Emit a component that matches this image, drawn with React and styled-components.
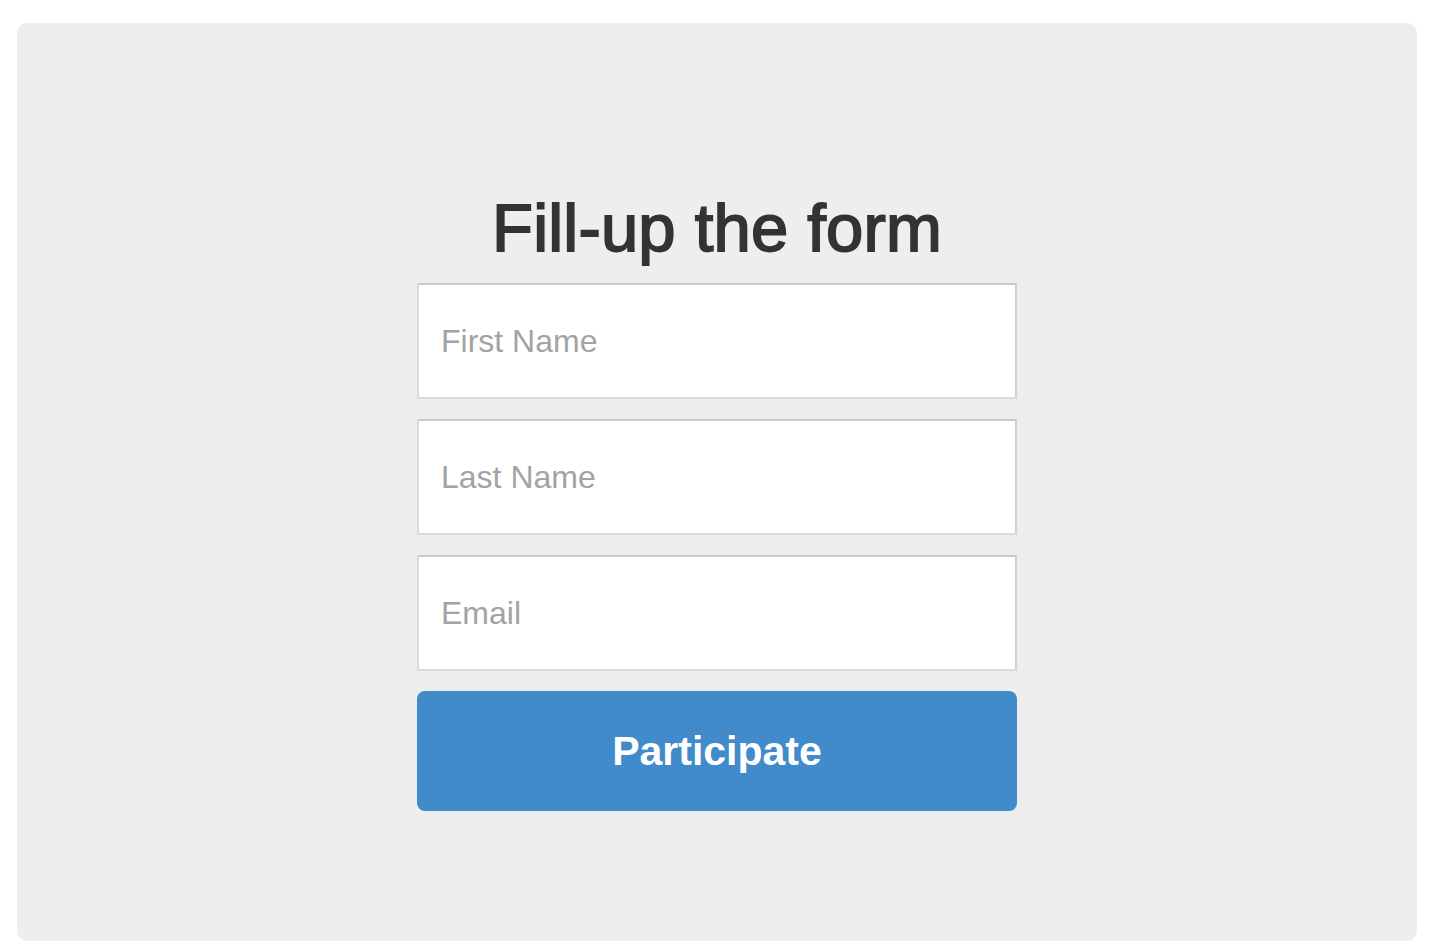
import styled, { createGlobalStyle } from "styled-components";

const GlobalStyle = createGlobalStyle`
  body {
    margin: 0;
    background: #fff;
    font-family: "Liberation Sans", Arial, sans-serif;
  }
`;

const Card = styled.div`
  box-sizing: border-box;
  width: 1400px;
  height: 918px;
  margin: 23px 0 0 17px;
  padding-top: 169px;
  background-color: #eeeeee;
  border-radius: 10px;
  display: flex;
  flex-direction: column;
  align-items: center;
`;

const Title = styled.h1`
  margin: 0 0 20px;
  font-size: 67px;
  line-height: 71px;
  font-weight: normal;
  letter-spacing: 0.2px;
  color: #333333;
  -webkit-text-stroke: 1.8px #333333;
`;

const Form = styled.form`
  width: 600px;
  display: flex;
  flex-direction: column;
  gap: 20px;
`;

const Input = styled.input`
  box-sizing: border-box;
  width: 100%;
  height: 116px;
  margin: 0;
  padding: 0 22px;
  background: #fff;
  border-style: solid;
  border-width: 2px;
  border-color: #c9c9c9 #d2d2d2 #dcdcdc #dadada;
  border-radius: 0;
  font-family: "Liberation Sans", Arial, sans-serif;
  font-size: 32px;
  color: #333;
  outline: none;
  &::placeholder {
    color: #a3a3a3;
  }
`;

const Button = styled.button`
  height: 120px;
  width: 100%;
  border: none;
  border-radius: 8px;
  background-color: #418bca;
  color: #fff;
  font-family: "Liberation Sans", Arial, sans-serif;
  font-size: 41px;
  font-weight: bold;
  cursor: pointer;
`;

export default function App() {
  return (
    <>
      <GlobalStyle />
      <Card>
        <Title>Fill-up the form</Title>
        <Form onSubmit={(e) => e.preventDefault()}>
          <Input type="text" placeholder="First Name" />
          <Input type="text" placeholder="Last Name" />
          <Input type="email" placeholder="Email" />
          <Button type="submit">Participate</Button>
        </Form>
      </Card>
    </>
  );
}
